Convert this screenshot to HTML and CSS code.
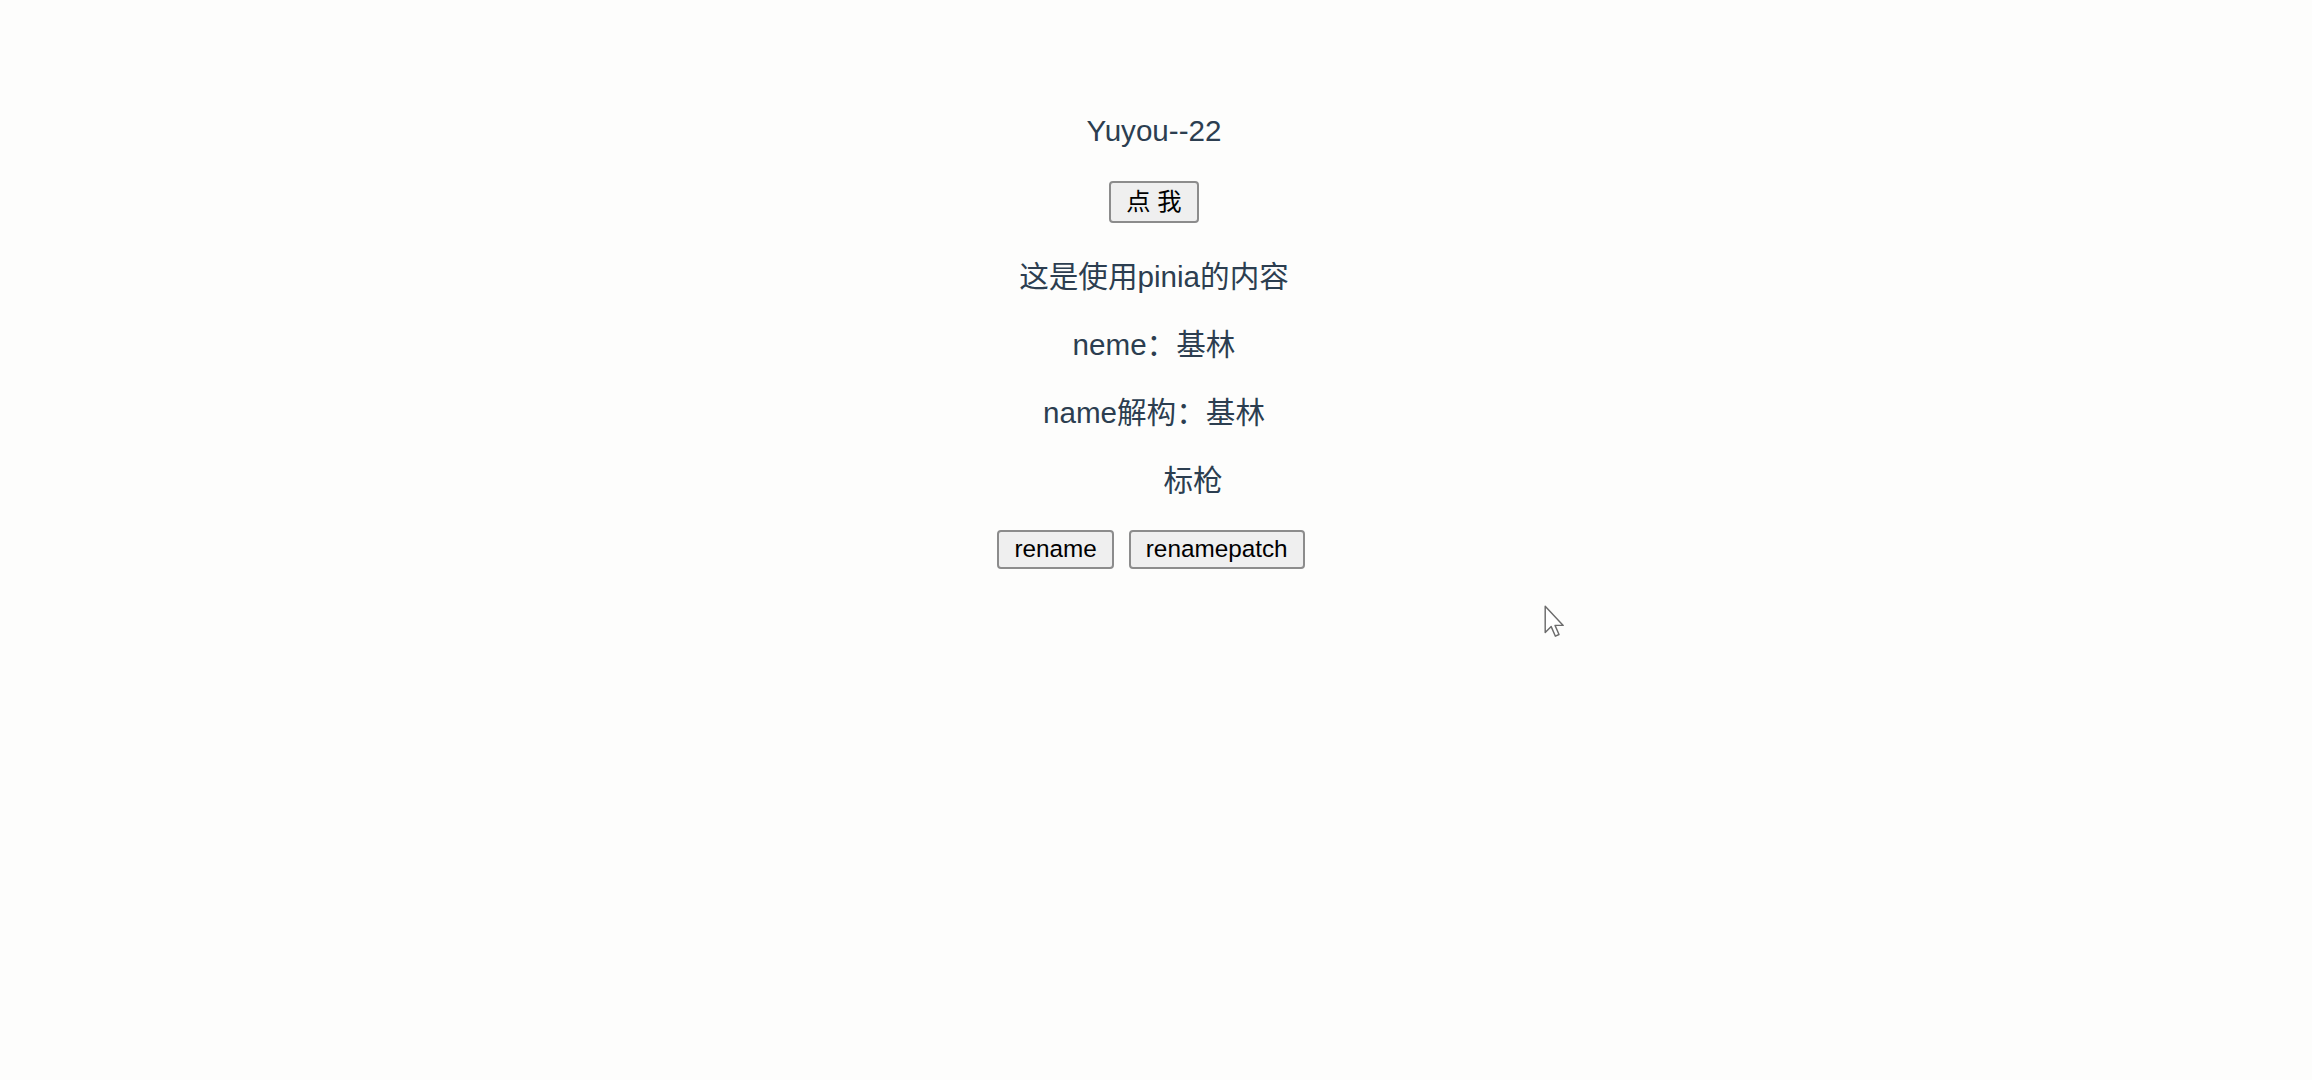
FILE: index.html
```html
<!DOCTYPE html>
<html lang="zh">
<head>
<meta charset="utf-8">
<title>pinia demo</title>
<link rel="stylesheet" href="styles.css">
</head>
<body>
<div class="app">
  <div class="title">Yuyou--22</div>
  <div class="row row-top">
    <button class="btn btn-click">点 我</button>
  </div>
  <p class="line line-first">这是使用pinia的内容</p>
  <p class="line">neme：基林</p>
  <p class="line">name解构：基林</p>
  <p class="line line-offset">标枪</p>
  <div class="row row-bottom">
    <button class="btn">rename</button>
    <button class="btn">renamepatch</button>
  </div>
</div>
<svg class="cursor" width="24" height="36" viewBox="0 0 20 30" xmlns="http://www.w3.org/2000/svg">
  <path d="M1 1 L1 23 L6 18 L9.5 26 L12.5 24.6 L9.2 17 L16 17 Z" fill="#ffffff" stroke="#6b6b6b" stroke-width="1.2" stroke-linejoin="round"/>
</svg>
</body>
</html>
```

FILE: styles.css
```css
html, body {
  margin: 0;
  padding: 0;
}

body {
  background: #fdfdfc;
  font-family: "Liberation Sans", "Noto Sans CJK SC", sans-serif;
  color: #2c3e50;
  min-height: 1080px;
  position: relative;
}

.app {
  text-align: center;
  padding-top: 111px;
  padding-right: 4px;
  font-size: 29.6px;
  line-height: 40px;
}

.title {
  height: 40px;
}

.row {
  display: flex;
  justify-content: center;
  gap: 15px;
}

.row-top {
  margin-top: 30px;
  height: 42px;
}

.row-bottom {
  margin-top: 29px;
  height: 39px;
  padding-right: 6px;
}

.line {
  margin: 28px 0 0;
  height: 40px;
}

.line-first {
  margin-top: 34px;
}

.line-offset {
  padding-left: 78px;
}

.btn {
  font-family: "Liberation Sans", "Noto Sans CJK SC", sans-serif;
  font-size: 24.3px;
  line-height: 1;
  color: #000;
  background: #efefef;
  border: 2px solid #8c8c8c;
  border-radius: 4px;
  padding: 0 15px;
  height: 39px;
}

.btn-click {
  height: 42px;
}

.cursor {
  position: absolute;
  left: 1544px;
  top: 605px;
}
```
